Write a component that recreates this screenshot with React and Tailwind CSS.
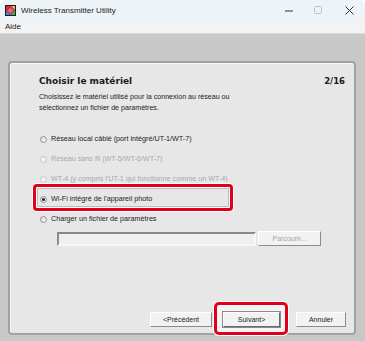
import { useState } from 'react';

const body = { fontFamily: '"Liberation Sans", Arial, sans-serif' };
const heading = { fontFamily: '"DejaVu Sans", Verdana, sans-serif' };

const options = [
  { label: 'Réseau local câblé (port intégré/UT-1/WT-7)', disabled: false },
  { label: 'Réseau sans fil (WT-5/WT-6/WT-7)', disabled: true },
  { label: "WT-4 (y compris l'UT-1 qui fonctionne comme un WT-4)", disabled: true },
  { label: "Wi-Fi intégré de l'appareil photo", disabled: false, highlight: true },
  { label: 'Charger un fichier de paramètres', disabled: false },
];

function AppIcon() {
  return (
    <svg width="11" height="11" viewBox="0 0 11 11">
      <rect x="0" y="0" width="11" height="11" fill="#1b1b1b" />
      <polygon points="1,1 6,1 1,6" fill="#e8262a" />
      <polygon points="6,1 10,1 10,5" fill="#f6c21b" />
      <polygon points="1,6 1,10 5,10" fill="#2f9be0" />
      <polygon points="10,5 10,10 5,10" fill="#3cb64a" />
      <polygon points="6,1 10,5 5,10 1,6" fill="#c13ab0" />
      <polygon points="5,3 8,5.5 5,8 3,5.5" fill="#f07a1e" />
    </svg>
  );
}

function Radio({ checked, disabled }) {
  return (
    <span
      className={`relative w-[7px] h-[7px] rounded-full border flex items-center justify-center shrink-0 ${
        disabled ? 'border-[#c4c4c4] bg-[#f2f2f2]' : 'border-[#8f8f8f] bg-gradient-to-br from-[#d8d8d8] to-white'
      }`}
    >
      {checked && <span className="w-[3px] h-[3px] rounded-full bg-[#1a1a1a]" />}
    </span>
  );
}

function Button({ children, isDefault, disabled, className = '' }) {
  return (
    <button
      className={`h-[15px] px-0 flex items-center justify-center whitespace-nowrap text-[7px] leading-none bg-[#f2f2f2] border border-t-white border-l-white ${
        isDefault ? 'border-r-[#6b6b6b] border-b-[#6b6b6b] outline outline-1 outline-[#8a8a8a]' : 'border-r-[#8c8c8c] border-b-[#8c8c8c]'
      } ${disabled ? 'text-[#a3a3a3]' : 'text-[#1a1a1a]'} ${className}`}
      style={body}
    >
      {children}
    </button>
  );
}

export default function App() {
  const [selected, setSelected] = useState(3);

  return (
    <div className="w-[365px] h-[341px] flex flex-col bg-white overflow-hidden" style={body}>
      {/* Barre de titre */}
      <div className="h-[21px] flex items-center bg-[#eef3f7] rounded-t-[6px] pl-[5px] shrink-0">
        <AppIcon />
        <span className="ml-[5px] text-[8px] text-[#1a1a1a]">Wireless Transmitter Utility</span>
        <div className="ml-auto flex items-center h-full">
          <svg width="9" height="9" viewBox="0 0 9 9" className="mr-[20px]">
            <line x1="0" y1="5" x2="8" y2="5" stroke="#333" strokeWidth="1" />
          </svg>
          <svg width="9" height="9" viewBox="0 0 9 9" className="mr-[22px]">
            <rect x="0.5" y="0.5" width="7" height="7" rx="1" fill="none" stroke="#c2c2c2" strokeWidth="1" />
          </svg>
          <svg width="9" height="9" viewBox="0 0 9 9" className="mr-[11px]">
            <path d="M0.5 0.5 L8.5 8.5 M8.5 0.5 L0.5 8.5" stroke="#333" strokeWidth="1" />
          </svg>
        </div>
      </div>

      {/* Menu */}
      <div className="h-[13px] flex items-center bg-[#f3f3f3] border-b border-[#dadada] px-[5px] shrink-0">
        <span className="text-[8px] text-[#1a1a1a]">Aide</span>
      </div>

      {/* Zone principale */}
      <div className="flex-1 bg-[#c8c8c8] pt-[27px] pl-[8px] pr-[9px] pb-[6px] flex">
        <div className="flex-1 flex flex-col bg-[#e7e7e7] border-2 border-[#a2a2a2] rounded-[4px] shadow-[inset_1px_1px_0_#f6f6f6] pl-[29px] pr-[8px] pt-[12px] pb-[6px]">
          <div className="flex justify-between items-center h-[12px]" style={heading}>
            <span className="text-[9px] font-bold text-[#1a1a1a] leading-[12px]">Choisir le matériel</span>
            <span className="text-[8.5px] font-bold text-[#1a1a1a] leading-[12px] mr-[1px]">2/16</span>
          </div>

          <p className="mt-[5px] text-[7.1px] leading-[11px] text-[#1a1a1a]">
            Choisissez le matériel utilisé pour la connexion au réseau ou
            <br />
            sélectionnez un fichier de paramètres.
          </p>

          <div className="mt-[15px] flex flex-col">
            {options.map((opt, i) => (
              <div
                key={opt.label}
                onClick={() => !opt.disabled && setSelected(i)}
                className="relative h-[20px] flex items-center gap-[4px] pl-[1px]"
              >
                {opt.highlight && (
                  <span className="absolute left-[-6px] top-[-5px] w-[200px] h-[27px] rounded-[4px] border-[3px] border-[#e1001b] shadow-[0_0_0_1px_#ffffff,inset_0_0_0_1px_#ffffff,inset_0_0_0_2px_#bdbdbd] pointer-events-none" />
                )}
                <Radio checked={selected === i} disabled={opt.disabled} />
                <span className={`text-[7.2px] leading-none ${opt.disabled ? 'text-[#a8a8a8]' : 'text-[#1a1a1a]'}`}>
                  {opt.label}
                </span>
              </div>
            ))}
          </div>

          <div className="mt-[2px] ml-[18px] flex items-center gap-[2px]">
            <div className="w-[199px] h-[14px] bg-[#efefef] border-2 border-t-[#8a8a8a] border-l-[#8a8a8a] border-r-[#f7f7f7] border-b-[#f7f7f7]" />
            <Button disabled className="w-[63px] h-[15px]">Parcourir...</Button>
          </div>

          <div className="flex-1" />

          <div className="flex justify-end items-center">
            <Button className="w-[62px]">&lt;Précédent</Button>
            <div className="relative ml-[11px]">
              <span className="absolute left-[-9px] top-[-10px] w-[74px] h-[33px] rounded-[5px] border-[3px] border-[#e1001b] bg-[#f4f4f4] shadow-[0_0_0_1px_#ffffff] pointer-events-none" />
              <Button isDefault className="relative w-[57px]">Suivant&gt;</Button>
            </div>
            <Button className="w-[50px] ml-[16px]">Annuler</Button>
          </div>
        </div>
      </div>
    </div>
  );
}
